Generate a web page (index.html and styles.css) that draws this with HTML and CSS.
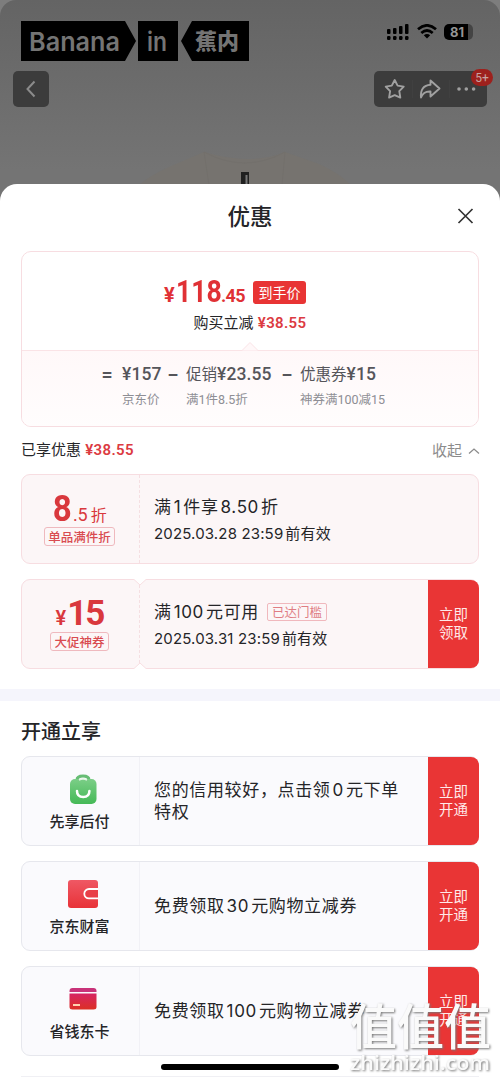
FILE: index.html
```html
<!DOCTYPE html>
<html lang="zh-CN">
<head>
<meta charset="utf-8">
<title>优惠</title>
<link rel="stylesheet" href="styles.css">
</head>
<body>
<div class="screen">
  <header class="top">
    <svg class="shirt" width="220" height="34" viewBox="0 0 220 34"><path d="M0 34Q12 24 30 16L65 1Q112 15 146 1L180 13Q200 22 212 34Z" fill="#76736f"/><path d="M65 1Q106 23 146 1M65 1l5 33M146 1l-3 33" fill="none" stroke="#73706c"/><path d="M102 21h8v13h-8z" fill="#202020"/><path d="M107.500 24v10" stroke="#777" stroke-width="2"/></svg>
    <div class="status">
      <svg class="logo" width="230" height="42" viewBox="0 0 230 42">
        <path d="M0 0h104l11 20-11 20H0zM117 0h40v40h-40zM171 0h57v40h-57l-11-20z" fill="#000"/>
        <g fill="#747474">
          <text class="latin" x="8" y="30" textLength="91" lengthAdjust="spacingAndGlyphs">Banana</text>
          <text class="latin" x="126" y="30" textLength="20" lengthAdjust="spacingAndGlyphs">in</text>
          <text class="brand-cn" x="174" y="28" textLength="44">蕉内</text>
        </g>
      </svg>
      <div class="indicators">
        <svg width="24" height="17" viewBox="0 0 24 17"><g fill="#000"><rect x="1" y="5" width="3.500" height="5" rx="1"/><rect x="7" y="4" width="3.500" height="6" rx="1"/><rect x="13" y="2" width="3.500" height="8" rx="1"/><rect x="19" y="0" width="3.500" height="10" rx="1"/><rect x="1" y="12" width="3.500" height="4" rx="1.300"/><rect x="7" y="12" width="3.500" height="4" rx="1.300"/><rect x="13" y="12" width="3.500" height="4" rx="1.300"/><rect x="19" y="12" width="3.500" height="4" rx="1.300"/></g></svg>
        <svg width="20" height="15" viewBox="0 0 20 15"><g fill="none" stroke="#000" stroke-width="2.700"><path d="M1 5.300Q10-2.600 19 5.300"/><path d="M4.300 9Q10 4 15.700 9"/></g><path d="M6.800 11.200Q10 8.600 13.200 11.200L10 14.600z"/></svg>
        <div class="battery"><span>81</span></div>
      </div>
    </div>
    <nav class="nav">
      <div class="back"><svg width="36" height="36" viewBox="0 0 36 36"><path d="M21.500 10.500L14.500 18l7 7.500" fill="none" stroke="#8b8b8b" stroke-width="2"/></svg></div>
      <div class="tools">
        <svg width="113" height="36" viewBox="0 0 113 36"><g fill="none" stroke="#a0a0a0" stroke-width="1.900" stroke-linejoin="round"><path d="M20.700 9l2.900 5.600 6.100 1-4.400 4.500 1 6.500-5.600-2.500-5.600 2.500 1-6.500-4.400-4.500 6.100-1z"/><path d="M56.500 9.500l9 8-9 8v-5Q49.500 20 47 26.500 46 14.500 56.500 13.800z"/></g><path d="M38.500 9v18M75.500 9v18" stroke="#404040"/><g fill="#a0a0a0"><circle cx="85" cy="18" r="1.800"/><circle cx="92.300" cy="18" r="1.800"/><circle cx="99.600" cy="18" r="1.800"/></g></svg>
        <span class="badge">5+</span>
      </div>
    </nav>
  </header>

  <main class="sheet">
    <div class="title"><h1>优惠</h1><svg class="close" width="18" height="18" viewBox="0 0 18 18"><path d="M1.500 2l14 14M15.500 2l-14 14" stroke="#333" stroke-width="1.700"/></svg></div>

    <section class="price-card">
      <div class="final">
        <div class="amount"><span class="yen">¥</span><span class="big">118</span><span class="cents">.45</span><span class="tag">到手价</span></div>
        <div class="saving">购买立减 <b>¥38.55</b></div>
      </div>
      <svg class="caret" width="20" height="10" viewBox="0 0 20 10"><path d="M0 9.500h2L10 1.500 18 9.500h2" fill="#fff8f9" stroke="#fae3e6"/></svg>
      <div class="formula">
        <span class="op"><span class="equals">=</span></span>
        <div class="term t1"><p><b>¥157</b></p><small>京东价</small></div>
        <span class="op">−</span>
        <div class="term t2"><p>促销<b>¥23.55</b></p><small>满1件8.5折</small></div>
        <span class="op">−</span>
        <div class="term t3"><p>优惠券<b>¥15</b></p><small>神券满100减15</small></div>
      </div>
    </section>

    <div class="summary"><div>已享优惠 <b>¥38.55</b></div><div class="fold">收起<svg width="12" height="8" viewBox="0 0 12 8"><path d="M1 6.500l5-4.500 5 4.500" fill="none" stroke="#8c8c8c" stroke-width="1.300"/></svg></div></div>

    <div class="list">
      <article class="coupon pink">
        <div class="left"><div class="value discount"><strong>8</strong><span>.5</span><i>折</i></div><span class="label">单品满件折</span></div>
        <div class="body"><h3>满<span class="n">1</span>件享<span class="n">8.50</span>折</h3><p><span class="date">2025.03.28 23:59</span>前有效</p></div>
      </article>
      <article class="coupon pink">
        <div class="left"><div class="value cash"><i>¥</i><strong>15</strong></div><span class="label">大促神券</span></div>
        <div class="body"><h3>满<span class="n">100</span>元可用<span class="reached">已达门槛</span></h3><p><span class="date">2025.03.31 23:59</span>前有效</p></div>
        <div class="action">立即<br>领取</div>
        <svg class="notch notch-top" width="14" height="7" viewBox="0 0 14 7"><path d="M0 0L1 .5 7 6l6-5.500 1-.5z" fill="#fff"/><path d="M0 .5h1L7 6l6-5.500h1" fill="none" stroke="#f8dfe2"/></svg>
        <svg class="notch notch-bottom" width="14" height="7" viewBox="0 0 14 7"><path d="M0 7l1-.5L7 1l6 5.500 1 .5z" fill="#fff"/><path d="M0 6.500h1L7 1l6 5.500h1" fill="none" stroke="#f8dfe2"/></svg>
      </article>
    </div>

    <div class="band"></div>
    <h2>开通立享</h2>

    <div class="list">
      <article class="coupon gray">
        <div class="left service">
          <svg width="30" height="32" viewBox="0 0 30 32"><defs><linearGradient id="green" x2="0" y2="1"><stop stop-color="#7bce87"/><stop offset="1" stop-color="#45b957"/></linearGradient></defs><path d="M9 8V7q0-4 6-4t6 4v1" fill="none" stroke="#67bd75" stroke-width="3"/><rect x="2" y="6" width="26.500" height="25" rx="5" fill="url(#green)"/><path d="M9 18q0 6 6.200 6t6.200-6" fill="none" stroke="#fff" stroke-width="2.500" stroke-linecap="round"/><path d="M11 7q4-2 8 0" fill="none" stroke="#e3f5e5" stroke-width="1.500"/></svg>
          <span>先享后付</span></div>
        <div class="body"><h3>您的信用较好，点击领<span class="n">0</span>元下单特权</h3></div><div class="action">立即<br>开通</div>
      </article>
      <article class="coupon gray">
        <div class="left service">
          <svg width="30" height="32" viewBox="0 0 30 32"><defs><linearGradient id="wallet" x2="0" y2="1"><stop stop-color="#ef5864"/><stop offset="1" stop-color="#e83238"/></linearGradient></defs><rect x="0" y="2" width="30" height="28" rx="3" fill="url(#wallet)"/><path d="M30 11H21a4.700 4.700 0 0 0 0 9.400h9" fill="#e83f48" stroke="#fff" stroke-width="1.800"/></svg>
          <span>京东财富</span></div>
        <div class="body"><h3>免费领取<span class="n">30</span>元购物立减券</h3></div><div class="action">立即<br>开通</div>
      </article>
      <article class="coupon gray">
        <div class="left service">
          <svg width="30" height="32" viewBox="0 0 30 32"><defs><linearGradient id="card" x2="0" y2="1"><stop stop-color="#d62463"/><stop offset="1" stop-color="#dc3024"/></linearGradient></defs><path d="M1.500 8q0-3 3-3h21q3 0 3 3v1h-27z" fill="#c83279"/><path d="M1.500 10.500h27V24q0 2.500-3 2.500h-21q-3 0-3-2.500z" fill="url(#card)"/><path d="M5 22h7" stroke="#ffd2b0" stroke-width="2"/></svg>
          <span>省钱东卡</span></div>
        <div class="body"><h3>免费领取<span class="n">100</span>元购物立减券</h3></div><div class="action">立即<br>开通</div>
      </article>
    </div>
    <div class="next"></div>
  </main>
  <div class="home"></div>
  <svg class="watermark" width="152" height="84" viewBox="0 0 152 84"><g class="wm-shadow"><text class="wm-cn" x="2" y="48" textLength="141" lengthAdjust="spacingAndGlyphs">值值值</text><text class="wm-url" x="2" y="73" textLength="140" lengthAdjust="spacingAndGlyphs">zhizhizhi.com</text></g></svg>
</div>
</body>
</html>
```
FILE: styles.css
```css
* { box-sizing: border-box; }
body, h1, h2, h3, p { margin: 0; }
body { background: #7d7d7d; font-family: Inter, "Noto Sans CJK SC", sans-serif; color: #252528; }
i { font-style: normal; }
svg { display: block; flex: none; }
.screen { position: relative; width: 500px; height: 1081px; overflow: hidden; }
.top { position: relative; height: 200px; background: linear-gradient(#646464, #747474 170px); border-radius: 16px 16px 0 0; }
.shirt { position: absolute; left: 139px; top: 151px; }
.status { display: flex; justify-content: space-between; height: 71px; padding: 21px 24px 0 21px; }
.latin { font: 600 26px Inter, sans-serif; }
.brand-cn { font: 900 22px "Noto Sans CJK SC", sans-serif; }
.indicators { display: flex; align-items: flex-start; gap: 7px; padding-top: 3px; }
.battery { display: flex; align-items: center; width: 29px; height: 16px; margin-right: 3px; padding-left: 6px; border-radius: 5px; background: linear-gradient(90deg, #000 24px, #444 24px); color: #959595; font: 700 13px/16px Inter, sans-serif; }
.nav { position: relative; display: flex; justify-content: space-between; padding: 0 13px; }
.back, .tools { height: 36px; border-radius: 5px; background: #3c3c3c; }
.tools { position: relative; }
.badge { position: absolute; right: -6px; top: -2px; width: 22px; height: 17px; border-radius: 9px; background: #9d211d; color: #c8a5a3; font: 12px/18px Roboto, sans-serif; text-align: center; }
.sheet { position: relative; height: 897px; margin-top: -16px; background: #fff; border-radius: 17px 17px 0 0; overflow: hidden; }
.title { position: relative; display: flex; justify-content: center; height: 67px; }
h1 { font-size: 22.500px; line-height: 65px; font-weight: 500; }
.close { position: absolute; right: 25px; top: 23px; }
.price-card { position: relative; height: 176px; margin: 0 21px; border: 1px solid #f7dde1; border-radius: 10px; overflow: hidden; }
.final { height: 98px; padding-top: 22px; }
.amount { display: flex; align-items: baseline; height: 38px; padding-left: 142px; line-height: 36px; color: #e03135; font-family: Roboto, sans-serif; font-weight: 700; white-space: nowrap; }
.yen { width: 12px; font-size: 20px; }
.big { width: 45px; font-size: 31px; transform: scaleX(.86); transform-origin: 0 50%; }
.cents { width: 32px; font-size: 18px; letter-spacing: -.6px; }
.tag { align-self: center; width: 53px; height: 23px; margin-top: -1px; border-radius: 3px; background: #e83434; color: #fff; font: 400 14px/22px "Noto Sans CJK SC", sans-serif; text-align: center; }
.saving { font-size: 15px; line-height: 22px; text-align: center; }
.saving b, .summary b { font-family: Roboto, sans-serif; font-weight: 600; letter-spacing: .35px; color: #dc3b42; }
.caret { position: absolute; left: 218px; top: 89px; }
.formula { display: flex; height: 78px; padding: 12px 0 0 79px; border-top: 1px solid #fae3e6; background: linear-gradient(#fff8f9, #fffdfd); color: #55555a; }
.op { width: 21px; font: 600 18px/22px Inter, sans-serif; }
.equals { display: inline-block; }
.term p { font-size: 15.500px; line-height: 22px; white-space: nowrap; }
.term b { font-family: Roboto, sans-serif; font-weight: 500; font-size: 17.500px; letter-spacing: .1px; }
.term small { display: block; margin-top: 4px; font: 12.500px/20px Roboto, "Noto Sans CJK SC", sans-serif; color: #8e8e94; white-space: nowrap; }
.t1 { width: 45px; }
.t2 { width: 95px; }
.t1 + .op, .t2 + .op { width: 19px; }
.summary { display: flex; justify-content: space-between; height: 47px; padding: 0 20px 0 21px; font-size: 15px; line-height: 45px; }
.fold { display: flex; align-items: center; gap: 6px; color: #8c8c8c; }
.list { display: flex; flex-direction: column; gap: 15px; padding: 0 21px; }
.coupon { position: relative; display: flex; height: 90px; border: 1px solid #f7dde1; border-radius: 9px; background: #fcf6f7; }
.gray { border-color: #e6e7ed; background: #fafafd; }
.left { display: flex; flex-direction: column; align-items: center; width: 118px; flex: none; padding-right: 2px; border-right: 1px dashed #f5dfe2; }
.gray .left { border-right: 1px solid #f1f1f6; }
.value { display: flex; align-items: baseline; height: 50px; padding-top: 14px; color: #d9383d; line-height: 40px; font-family: Roboto, "Noto Sans CJK SC", sans-serif; }
.value strong { font-size: 36px; transform: scaleX(.92); }
.discount { font-size: 18px; }
.discount i { margin-left: 3px; font-size: 16px; }
.cash strong { font-size: 35px; letter-spacing: -2px; transform: none; }
.cash i { margin-right: 1px; font-size: 20px; font-weight: 600; }
.label { margin-top: 2px; padding: 0 3px; border: 1px solid #efb9be; border-radius: 3px; color: #d94b50; font: 500 12.500px/17px "Noto Sans CJK SC", sans-serif; }
.body { flex: 1; padding: 21px 16px 0 14px; }
h3 { font-size: 17px; line-height: 22px; font-weight: 400; letter-spacing: .65px; }
.n { margin: 0 2px; }
.body p { margin-top: 5px; font-size: 15px; line-height: 22px; letter-spacing: .15px; }
.date { margin-right: 2px; }
.reached { display: inline-block; margin-left: 8px; padding: 0 4px; border: 1px solid #f0b8bd; border-radius: 2px; color: #df7d83; font: 12.500px/16px "Noto Sans CJK SC", sans-serif; letter-spacing: 0; vertical-align: 1px; }
.action { display: flex; align-items: center; justify-content: center; width: 51px; margin: 0 -1px 0 0; border-radius: 0 8px 8px 0; background: #e93535; color: #ffe9e9; font-size: 14.500px; line-height: 18px; flex: none; }
.notch { position: absolute; left: 110.500px; }
.notch-top { top: -1px; }
.notch-bottom { bottom: -1px; }
.band { height: 12px; margin: 20px 0 0; background: #f5f5fc; }
h2 { height: 55px; padding-left: 21px; font-size: 20px; line-height: 62px; font-weight: 500; }
.service { padding-top: 16px; font-size: 15px; line-height: 22px; font-weight: 500; }
.service span { margin-top: 6px; }
.service svg { margin-left: 6px; }
.gray .body { display: flex; align-items: center; padding-top: 0; padding-bottom: 1px; }
.next { height: 1px; margin: 20px 21px 0; background: #f0f0f4; }
.home { position: absolute; left: 161px; top: 1064px; width: 178px; height: 6px; border-radius: 3px; background: #000; }
.watermark { position: absolute; left: 348px; top: 997px; }
.wm-shadow { fill: #fafafa; filter: drop-shadow(1px 1px 1px #777); }
.wm-cn { font: 500 49px "Noto Sans CJK SC", sans-serif; }
.wm-url { font: 600 20px "Open Sans", sans-serif; }
```
